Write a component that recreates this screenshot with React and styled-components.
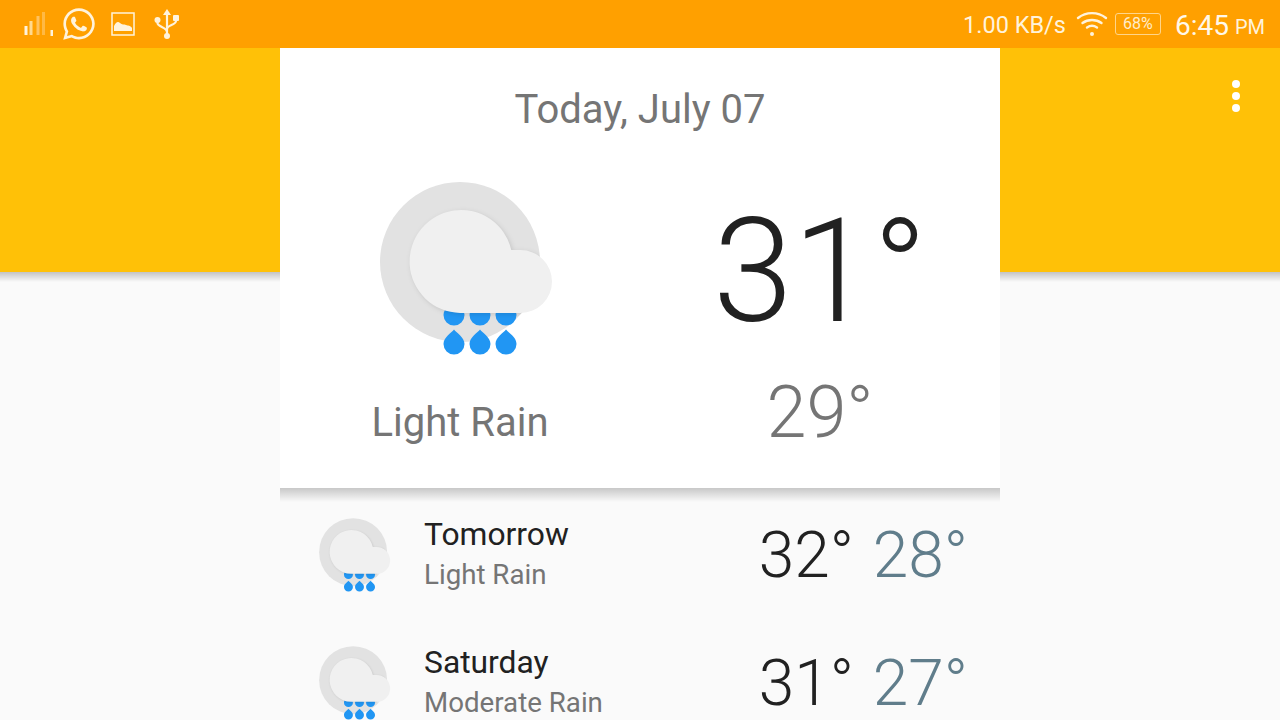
import React from "react";
import styled, { createGlobalStyle } from "styled-components";
import { FaWhatsapp } from "react-icons/fa";

const Global = createGlobalStyle`
  html, body { margin: 0; padding: 0; background: #fafafa; }
  body { font-family: Roboto, "Liberation Sans", sans-serif; }
`;

const Page = styled.div`
  position: relative;
  width: 1280px;
  height: 720px;
  overflow: hidden;
  background: #fafafa;
`;
const StatusBar = styled.header`
  position: relative;
  z-index: 2;
  height: 48px;
  background: #ffa000;
  display: flex;
  align-items: center;
  justify-content: space-between;
  padding: 0 15px 0 23px;
  color: #fff3dc;
`;
const StatusGroup = styled.div`
  display: flex;
  align-items: center;
`;
const SignalSvg = styled.svg`
  display: block;
  width: 32px;
  height: 24px;
`;
const Whatsapp = styled(FaWhatsapp)`
  width: 36px;
  height: 36px;
  margin-left: 6px;
  color: #fff3dc;
`;
const PictureSvg = styled.svg`
  width: 24px;
  height: 24px;
  margin-left: 14px;
`;
const UsbSvg = styled.svg`
  width: 26px;
  height: 30px;
  margin-left: 19px;
`;
const Speed = styled.span`
  font-size: 23.5px;
  margin-right: 10px;
  position: relative;
  top: 1px;
`;
const WifiSvg = styled.svg`
  width: 32px;
  height: 26px;
`;
const Battery = styled.span`
  box-sizing: border-box;
  width: 46px;
  height: 22px;
  border: 1px solid #ffd58a;
  border-radius: 3px;
  font-size: 16px;
  line-height: 20px;
  text-align: center;
  margin: 0 14px 0 7px;
  color: #ffeccb;
`;
const Clock = styled.span`
  font-size: 28px;
  position: relative;
  top: 1px;
  color: #fff8ea;
`;
const Meridiem = styled.span`
  font-size: 20px;
  margin-left: 6px;
  position: relative;
  top: 3px;
  color: #fff3dc;
`;
const AppBand = styled.div`
  position: absolute;
  top: 48px;
  left: 0;
  right: 0;
  height: 224px;
  background: #ffc107;
  &::after {
    content: "";
    position: absolute;
    top: 100%;
    left: 0;
    right: 0;
    height: 10px;
    background: linear-gradient(rgba(0, 0, 0, 0.22), rgba(0, 0, 0, 0));
  }
`;
const Kebab = styled.div`
  position: absolute;
  top: 80px;
  right: 40px;
  display: flex;
  flex-direction: column;
  gap: 4px;
  z-index: 1;
`;
const Dot = styled.span`
  width: 8px;
  height: 8px;
  border-radius: 50%;
  background: #fff;
`;
const Column = styled.main`
  position: relative;
  width: 720px;
  margin: 0 auto;
`;
const Hero = styled.section`
  position: relative;
  height: 440px;
  background: #fff;
  display: flex;
  flex-direction: column;
  &::after {
    content: "";
    position: absolute;
    top: 100%;
    left: 0;
    right: 0;
    height: 14px;
    background: linear-gradient(rgba(0, 0, 0, 0.2), rgba(0, 0, 0, 0));
  }
`;
const HeroDate = styled.h1`
  margin: 0;
  padding-top: 39px;
  font-size: 40px;
  font-weight: 400;
  line-height: 46px;
  text-align: center;
  color: #757575;
`;
const HeroBody = styled.div`
  display: grid;
  grid-template-columns: 360px 360px;
`;
const HeroLeft = styled.div`
  display: flex;
  flex-direction: column;
  align-items: center;
`;
const HeroIcon = styled.svg`
  width: 180px;
  height: 180px;
  margin-top: 44px;
  margin-left: 10px;
  display: block;
  overflow: visible;
`;
const Condition = styled.div`
  font-size: 40px;
  line-height: 48px;
  margin-top: 42px;
  color: #757575;
`;
const HeroRight = styled.div`
  display: flex;
  flex-direction: column;
  align-items: center;
`;
const High = styled.div`
  font-size: 144px;
  font-weight: 300;
  line-height: 168px;
  margin-top: 55px;
  color: #212121;
`;
const Low = styled.div`
  font-size: 72px;
  font-weight: 300;
  line-height: 84px;
  margin-top: 15px;
  color: #757575;
`;
const Row = styled.article`
  height: 128px;
  display: flex;
  align-items: center;
  position: relative;
`;
const RowIcon = styled.svg`
  width: 76.5px;
  height: 76.5px;
  flex: none;
  margin-left: 37px;
  overflow: visible;
  position: relative;
  top: 2px;
`;
const RowText = styled.div`
  margin-left: 30.5px;
  flex: 1;
  display: flex;
  flex-direction: column;
  position: relative;
  top: 1px;
`;
const Day = styled.div`
  font-size: 31.8px;
  line-height: 38px;
  color: #212121;
`;
const Forecast = styled.div`
  font-size: 27.7px;
  line-height: 34px;
  margin-top: 5px;
  color: #757575;
`;
const Temps = styled.div`
  display: flex;
  gap: 19px;
  margin-right: 32px;
  font-size: 64px;
  font-weight: 300;
  line-height: 76px;
  position: relative;
  top: 4px;
`;
const TempHigh = styled.span`
  color: #212121;
`;
const TempLow = styled.span`
  color: #607d8b;
`;

const Drop = ({ x, y }) => (
  <path
    d={`M${x} ${y - 13.5} C${x + 2} ${y - 10.5} ${x + 10.5} ${y - 6} ${x + 10.5} ${y + 1} A10.5 10.5 0 0 1 ${x - 10.5} ${y + 1} C${x - 10.5} ${y - 6} ${x - 2} ${y - 10.5} ${x} ${y - 13.5}Z`}
    fill="#2196f3"
  />
);

const CLOUD = "M85 136 A51.500 51.500 0 1 1 136.300 73 L145.500 73 A31.500 31.500 0 0 1 145.500 136 Z";

const WeatherArt = ({ as: Comp, id, nudge = 0 }) => (
  <Comp viewBox="0 0 180 180" aria-hidden="true">
    <defs>
      <filter id={`${id}-blur`} x="-20%" y="-20%" width="140%" height="140%">
        <feGaussianBlur stdDeviation="2.500" />
      </filter>
      <clipPath id={`${id}-disc`}>
        <circle cx="85" cy="85" r="80" />
      </clipPath>
    </defs>
    <circle cx="85" cy="85" r="80" fill="#e2e2e2" />
    <g transform={`translate(${nudge} 0)`}>
      <Drop x={79} y={137} />
      <Drop x={105} y={137} />
      <Drop x={131} y={137} />
      <Drop x={79} y={166} />
      <Drop x={105} y={166} />
      <Drop x={131} y={166} />
      <g clipPath={`url(#${id}-disc)`}>
        <path d={CLOUD} transform="translate(1.500 1.500)" fill="#000" fillOpacity="0.13" filter={`url(#${id}-blur)`} />
      </g>
      <path d={CLOUD} fill="#f0f0f0" />
    </g>
  </Comp>
);

const SignalIcon = () => (
  <SignalSvg viewBox="0 0 32 24" aria-hidden="true">
    <rect x="1.500" y="14" width="3" height="9" fill="#fff3dc" />
    <rect x="6.500" y="9" width="3" height="14" fill="#ffd98f" />
    <rect x="13.500" y="4" width="3" height="19" fill="#ffc260" />
    <rect x="19" y="0" width="3" height="23" fill="#ffb944" />
    <rect x="27.500" y="18" width="2.500" height="6" fill="#fff3dc" />
  </SignalSvg>
);

const ImageIcon = () => (
  <PictureSvg viewBox="0 0 24 24" aria-hidden="true">
    <rect x="1" y="1" width="22" height="22" fill="none" stroke="#fff3dc" strokeWidth="1.500" />
    <path d="M3 19 V14 C5 10 7 9 9 11 C11 13 13 12 15 13 C17 14 19 13 21 16 V19Z" fill="#fff3dc" />
  </PictureSvg>
);

const UsbIcon = () => (
  <UsbSvg viewBox="0 0 26 30" aria-hidden="true">
    <g stroke="#fff3dc" strokeWidth="2.200" fill="none">
      <path d="M13 3V27" />
      <path d="M3.500 11V14C3.500 18 13 18 13 23" />
      <path d="M22 9V12C22 16 13 16 13 20" />
    </g>
    <path d="M13 0 L17 6 H9Z" fill="#fff3dc" />
    <circle cx="13" cy="27" r="3" fill="#fff3dc" />
    <circle cx="3.500" cy="11" r="3" fill="#fff3dc" />
    <rect x="19" y="6" width="6" height="6" rx="1" fill="#fff3dc" />
  </UsbSvg>
);

const WifiIcon = () => (
  <WifiSvg viewBox="0 0 32 26" aria-hidden="true">
    <g fill="none" stroke="#fff3dc" strokeWidth="2.400" strokeLinecap="round">
      <path d="M2 7C10 0.500 22 0.500 30 7" />
      <path d="M6.500 12C12 8 20 8 25.500 12" />
      <path d="M11 16.500C14 14.500 18 14.500 21 16.500" />
    </g>
    <circle cx="16" cy="23" r="2" fill="#fff3dc" />
  </WifiSvg>
);

const days = [
  { day: "Tomorrow", text: "Light Rain", hi: "32°", lo: "28°" },
  { day: "Saturday", text: "Moderate Rain", hi: "31°", lo: "27°" },
];

export default function App() {
  return (
    <Page>
      <Global />
      <StatusBar>
        <StatusGroup>
          <SignalIcon />
          <Whatsapp />
          <ImageIcon />
          <UsbIcon />
        </StatusGroup>
        <StatusGroup>
          <Speed>1.00 KB/s</Speed>
          <WifiIcon />
          <Battery>68%</Battery>
          <Clock>6:45</Clock>
          <Meridiem>PM</Meridiem>
        </StatusGroup>
      </StatusBar>
      <AppBand />
      <Kebab>
        <Dot />
        <Dot />
        <Dot />
      </Kebab>
      <Column>
        <Hero>
          <HeroDate>Today, July 07</HeroDate>
          <HeroBody>
            <HeroLeft>
              <WeatherArt as={HeroIcon} id="hero-art" />
              <Condition>Light Rain</Condition>
            </HeroLeft>
            <HeroRight>
              <High>31°</High>
              <Low>29°</Low>
            </HeroRight>
          </HeroBody>
        </Hero>
        {days.map((d, i) => (
          <Row key={d.day}>
            <WeatherArt as={RowIcon} id={`row-art-${i}`} nudge={-5} />
            <RowText>
              <Day>{d.day}</Day>
              <Forecast>{d.text}</Forecast>
            </RowText>
            <Temps>
              <TempHigh>{d.hi}</TempHigh>
              <TempLow>{d.lo}</TempLow>
            </Temps>
          </Row>
        ))}
      </Column>
    </Page>
  );
}
